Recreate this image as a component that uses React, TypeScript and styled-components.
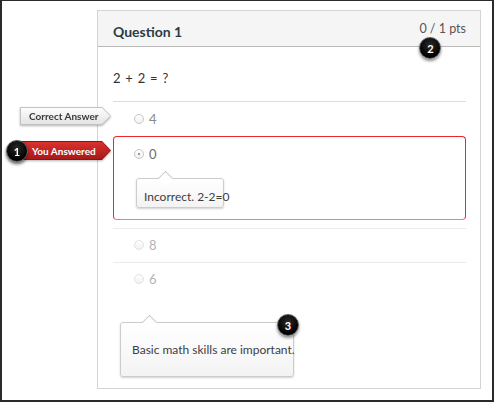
import React from 'react';
import styled, { createGlobalStyle } from 'styled-components';

const GlobalStyle = createGlobalStyle`
    html, body {
        margin: 0;
        padding: 0;
        background: #ffffff;
    }
    body {
        font-family: Lato, 'Open Sans', 'Liberation Sans', sans-serif;
        color: #333333;
    }
    * {
        box-sizing: border-box;
    }
`;

const Frame = styled.div`
    width: 494px;
    height: 402px;
    border-style: solid;
    border-color: #2a2a2a;
    border-width: 1px 2px 2px 2px;
    background: #ffffff;
    padding: 9px 0 0 95px;
`;

const Card = styled.section`
    width: 384px;
    height: 379px;
    border: 1px solid #d4d4d4;
    background: #ffffff;
`;

const Header = styled.header`
    position: relative;
    display: flex;
    justify-content: space-between;
    align-items: flex-start;
    height: 36px;
    padding: 0 14px 0 15px;
    background: #f5f5f5;
    border-bottom: 1px solid #b9b9b9;
`;

const Title = styled.h2`
    margin: 11px 0 0;
    font-size: 14px;
    line-height: 20px;
    font-weight: 700;
    color: #2d3b45;
`;

const Points = styled.span`
    position: relative;
    margin-top: 9px;
    font-size: 12.5px;
    line-height: 18px;
    color: #555555;
`;

const Body = styled.div`
    padding: 0 14px 0 15px;
`;

const QuestionText = styled.p`
    margin: 0;
    padding: 22px 0 14px;
    font-size: 13px;
    line-height: 18px;
    word-spacing: 1.5px;
    color: #333333;
`;

interface RowProps {
    $divider?: boolean;
}

const AnswerRow = styled.div<RowProps>`
    position: relative;
    height: ${(p) => (p.$divider ? '34px' : '35px')};
    padding: ${(p) => (p.$divider ? '9px' : '10px')} 0 0 21px;
    border-top: 1px solid ${(p) => (p.$divider ? '#ebebeb' : '#dcdcdc')};
`;

const WrongBox = styled.div`
    position: relative;
    padding: 10px 0 11px 20px;
    margin-bottom: 8px;
    border: 1px solid #f0262d;
    border-bottom-color: #f47c7c;
    border-radius: 4px;
`;

interface OptionProps {
    $tone: string;
}

const Option = styled.div<OptionProps>`
    display: flex;
    align-items: center;
    gap: 5px;
    height: 14px;
    font-size: 13px;
    color: ${(p) => p.$tone};
`;

interface RadioProps {
    $checked?: boolean;
    $faint?: boolean;
}

const Radio = styled.span<RadioProps>`
    position: relative;
    display: inline-block;
    width: 10px;
    height: 10px;
    border-radius: 50%;
    border: 1px solid ${(p) => (p.$faint ? '#e2e2e2' : '#c6c6c6')};
    background: linear-gradient(#ffffff, #f1f1f1);
    &::after {
        content: '';
        display: ${(p) => (p.$checked ? 'block' : 'none')};
        position: absolute;
        left: 3px;
        top: 3px;
        width: 2px;
        height: 2px;
        border-radius: 50%;
        background: #777777;
    }
`;

interface BubbleProps {
    $width: number;
    $height: number;
}

const Bubble = styled.div<BubbleProps>`
    position: relative;
    display: flex;
    align-items: center;
    width: ${(p) => p.$width}px;
    height: ${(p) => p.$height}px;
    background: linear-gradient(#ffffff, #f3f3f3);
    border: 1px solid #c9cdd0;
    border-radius: 3px;
    box-shadow: 0 1px 2px rgba(0, 0, 0, 0.18);
    font-size: 12px;
    white-space: nowrap;
    color: #3d3d3d;
    &::before {
        content: '';
        position: absolute;
        left: 23px;
        top: -6px;
        width: 10px;
        height: 10px;
        background: #ffffff;
        border-left: 1px solid #c9cdd0;
        border-top: 1px solid #c9cdd0;
        transform: rotate(45deg);
    }
`;

const FeedbackBubble = styled(Bubble)`
    margin: 17px 0 0 2px;
    padding: 6px 0 0 7px;
`;

const CommentBubble = styled(Bubble)`
    margin: 26px 0 0 7px;
    padding: 0 0 0 11px;
`;

interface TagProps {
    $kind: 'correct' | 'wrong';
}

const Tag = styled.div<TagProps>`
    position: absolute;
    right: calc(100% + ${(p) => (p.$kind === 'correct' ? '2px' : '3px')});
    top: ${(p) => (p.$kind === 'correct' ? '5px' : '4px')};
    width: ${(p) => (p.$kind === 'correct' ? '91px' : '90px')};
    height: ${(p) => (p.$kind === 'correct' ? '18px' : '19px')};
    filter: drop-shadow(0 1px 1px rgba(0, 0, 0, 0.3));
`;

const TagShape = styled.div<TagProps>`
    position: absolute;
    inset: 0;
    clip-path: polygon(0 0, calc(100% - 9px) 0, 100% 50%, calc(100% - 9px) 100%, 0 100%);
    background: ${(p) => (p.$kind === 'correct' ? '#c3c3c3' : '#8e1414')};
`;

const TagFace = styled.div<TagProps>`
    position: absolute;
    inset: 1px;
    display: flex;
    align-items: center;
    padding-left: ${(p) => (p.$kind === 'correct' ? '8px' : '10px')};
    clip-path: polygon(0 0, calc(100% - 8px) 0, 100% 50%, calc(100% - 8px) 100%, 0 100%);
    background: ${(p) =>
        p.$kind === 'correct'
            ? 'linear-gradient(#fdfdfd, #e4e4e4)'
            : 'linear-gradient(#d8322e, #a8191a)'};
    font-size: 10px;
    font-weight: 700;
    white-space: nowrap;
    color: ${(p) => (p.$kind === 'correct' ? '#3a3a3a' : '#ffffff')};
`;

interface BadgeProps {
    $left?: number;
    $right?: number;
    $top: number;
}

const Badge = styled.span<BadgeProps>`
    position: absolute;
    ${(p) => (p.$left !== undefined ? `left: ${p.$left}px;` : '')}
    ${(p) => (p.$right !== undefined ? `right: ${p.$right}px;` : '')}
    top: ${(p) => p.$top}px;
    z-index: 2;
    display: flex;
    align-items: center;
    justify-content: center;
    width: 22px;
    height: 22px;
    border-radius: 50%;
    background: radial-gradient(circle at 50% 35%, #2a2a2a, #000000 70%);
    border: 1px solid #5a5a5a;
    box-shadow: 0 2px 3px rgba(0, 0, 0, 0.45);
    font-size: 11px;
    font-weight: 700;
    line-height: 1;
    color: #ffffff;
`;

export default function App(): JSX.Element {
    return (
        <>
            <GlobalStyle />
            <Frame>
                <Card>
                    <Header>
                        <Title>Question 1</Title>
                        <Points>
                            0 / 1 pts
                            <Badge $left={0} $top={17}>2</Badge>
                        </Points>
                    </Header>
                    <Body>
                        <QuestionText>2 + 2 = ?</QuestionText>
                        <AnswerRow>
                            <Tag $kind="correct">
                                <TagShape $kind="correct" />
                                <TagFace $kind="correct">Correct Answer</TagFace>
                            </Tag>
                            <Option $tone="#8a8a8a">
                                <Radio />4
                            </Option>
                        </AnswerRow>
                        <WrongBox>
                            <Tag $kind="wrong">
                                <TagShape $kind="wrong" />
                                <TagFace $kind="wrong">You Answered</TagFace>
                                <Badge $left={-15} $top={-1}>1</Badge>
                            </Tag>
                            <Option $tone="#6e6e6e">
                                <Radio $checked />0
                            </Option>
                            <FeedbackBubble $width={88} $height={30}>
                                Incorrect. 2-2=0
                            </FeedbackBubble>
                        </WrongBox>
                        <AnswerRow $divider>
                            <Option $tone="#b4b4b4">
                                <Radio $faint />8
                            </Option>
                        </AnswerRow>
                        <AnswerRow $divider>
                            <Option $tone="#b4b4b4">
                                <Radio $faint />6
                            </Option>
                        </AnswerRow>
                        <CommentBubble $width={174} $height={55}>
                            Basic math skills are important.
                            <Badge $right={-6} $top={-9}>3</Badge>
                        </CommentBubble>
                    </Body>
                </Card>
            </Frame>
        </>
    );
}
